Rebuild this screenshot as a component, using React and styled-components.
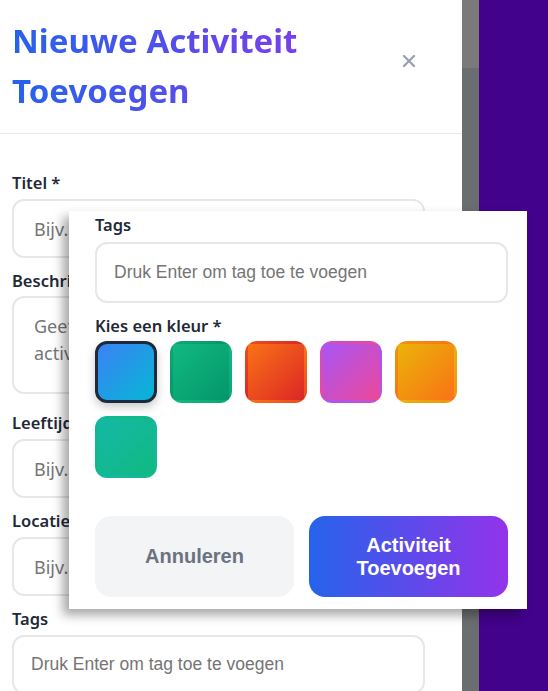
import React from "react";
import styled, { createGlobalStyle } from "styled-components";

const Global = createGlobalStyle`
  html, body { margin: 0; padding: 0; }
  body { font-family: "Noto Sans", "Open Sans", sans-serif; background: #fff; }
  * { box-sizing: border-box; }
`;

const Page = styled.div`
  position: relative;
  display: flex;
  width: 548px;
  height: 691px;
  overflow: hidden;
`;

const Modal = styled.div`
  width: 462px;
  flex: none;
  height: 691px;
  background: #fff;
  overflow: hidden;
  display: flex;
  flex-direction: column;
`;

const Strip = styled.div`
  width: 17px;
  flex: none;
  display: flex;
  flex-direction: column;
`;

const StripPart = styled.div`
  height: ${(p) => (p.$h ? `${p.$h}px` : "auto")};
  flex: ${(p) => (p.$h ? "none" : "1")};
  background: ${(p) => p.$c};
`;

const Backdrop = styled.div`
  flex: 1;
  background: #43028b;
`;

const Header = styled.div`
  display: flex;
  align-items: center;
  gap: 3px;
  padding: 16px 37px 17px 12px;
  border-bottom: 1px solid #e5e7eb;
`;

const Title = styled.h2`
  flex: 1;
  margin: 0;
  font-size: 33px;
  line-height: 50px;
  font-weight: 700;
  background: linear-gradient(90deg, #2563eb, #9333ea);
  -webkit-background-clip: text;
  background-clip: text;
  color: transparent;
`;

const Close = styled.button`
  width: 32px;
  height: 32px;
  margin-bottom: 10px;
  border: none;
  background: none;
  padding: 0;
  display: flex;
  align-items: center;
  justify-content: center;
  color: #9ca3af;
  cursor: pointer;
`;

const Form = styled.div`
  padding: 38px 37px 0 12px;
  display: flex;
  flex-direction: column;
`;

const Group = styled.div`
  display: flex;
  flex-direction: column;
  margin-bottom: ${(p) => p.$mb ?? 12}px;
`;

const Label = styled.label`
  display: block;
  font-size: 16.5px;
  line-height: 22px;
  font-weight: 600;
  color: #1f2937;
  margin-bottom: ${(p) => p.$mb ?? 5}px;
`;

const Input = styled.input`
  display: block;
  width: 100%;
  height: ${(p) => p.$h ?? 59}px;
  border: 2px solid #e5e7eb;
  border-radius: 12px;
  padding: 0 ${(p) => (p.$arial ? 17 : 20)}px;
  font-family: ${(p) =>
    p.$arial ? '"Liberation Sans", Arial, sans-serif' : '"Noto Sans", sans-serif'};
  font-size: ${(p) => (p.$arial ? 17.5 : 18)}px;
  color: #111827;
  background: #fff;
  outline: none;
  &::placeholder { color: #757575; }
`;

const TextArea = styled.textarea`
  display: block;
  width: 100%;
  height: 98px;
  border: 2px solid #e5e7eb;
  border-radius: 12px;
  padding: 15px 20px;
  font-family: "Noto Sans", sans-serif;
  font-size: 18px;
  line-height: 27px;
  resize: none;
  outline: none;
  &::placeholder { color: #757575; }
`;

const Sheet = styled.div`
  position: absolute;
  left: 69px;
  top: 211px;
  width: 458px;
  height: 398px;
  background: #fff;
  box-shadow: -6px 6px 10px rgba(0, 0, 0, 0.35);
  padding: 3px 19px 12px 26px;
  display: flex;
  flex-direction: column;
`;

const Swatches = styled.div`
  display: flex;
  flex-wrap: wrap;
  gap: 13px;
`;

const Swatch = styled.button`
  width: 62px;
  height: 62px;
  padding: 0;
  border-radius: 12px;
  border: 3px solid ${(p) => (p.$selected ? "#1e293b" : "transparent")};
  background: linear-gradient(135deg, ${(p) => p.$from}, ${(p) => p.$to});
  box-shadow: ${(p) => (p.$selected ? "0 4px 10px rgba(0,0,0,0.22)" : "none")};
  cursor: pointer;
`;

const Actions = styled.div`
  margin-top: 38px;
  display: grid;
  grid-template-columns: 1fr 1fr;
  gap: 15px;
`;

const Button = styled.button`
  height: 81px;
  border: none;
  border-radius: 16px;
  padding: 0 20px;
  font-family: "Liberation Sans", Arial, sans-serif;
  font-size: 20px;
  line-height: 23px;
  font-weight: 700;
  text-align: center;
  cursor: pointer;
  color: ${(p) => (p.$primary ? "#fff" : "#6b7280")};
  background: ${(p) =>
    p.$primary ? "linear-gradient(90deg, #2563eb, #9333ea)" : "#f3f4f6"};
`;

const colors = [
  ["#3b82f6", "#06b6d4"],
  ["#10b981", "#059669"],
  ["#f97316", "#dc2626"],
  ["#a855f7", "#ec4899"],
  ["#eab308", "#f97316"],
  ["#14b8a6", "#10b981"],
];

export default function App() {
  return (
    <>
      <Global />
      <Page>
        <Modal>
          <Header>
            <Title>Nieuwe Activiteit Toevoegen</Title>
            <Close aria-label="Sluiten">
              <svg width="16" height="16" viewBox="0 0 16 16">
                <path d="M3 3 L13 13 M13 3 L3 13" stroke="currentColor" strokeWidth="2.4" strokeLinecap="round" />
              </svg>
            </Close>
          </Header>
          <Form>
            <Group>
              <Label>Titel *</Label>
              <Input placeholder="Bijv. Knutselmiddag" />
            </Group>
            <Group $mb={18}>
              <Label $mb={4}>Beschrijving</Label>
              <TextArea placeholder="Geef een korte beschrijving van de activiteit" />
            </Group>
            <Group>
              <Label>Leeftijdsgroep</Label>
              <Input placeholder="Bijv. 4-8 jaar" />
            </Group>
            <Group>
              <Label>Locatie</Label>
              <Input placeholder="Bijv. Speelzaal" />
            </Group>
            <Group>
              <Label>Tags</Label>
              <Input $arial placeholder="Druk Enter om tag toe te voegen" />
            </Group>
          </Form>
        </Modal>
        <Strip>
          <StripPart $h={68} $c="#7a7a7a" />
          <StripPart $c="#6b6e71" />
        </Strip>
        <Backdrop />
        <Sheet>
          <Group>
            <Label $mb={6}>Tags</Label>
            <Input $arial $h={61} placeholder="Druk Enter om tag toe te voegen" />
          </Group>
          <Label $mb={4}>Kies een kleur *</Label>
          <Swatches>
            {colors.map(([f, t], i) => (
              <Swatch key={i} $from={f} $to={t} $selected={i === 0} />
            ))}
          </Swatches>
          <Actions>
            <Button>Annuleren</Button>
            <Button $primary>Activiteit Toevoegen</Button>
          </Actions>
        </Sheet>
      </Page>
    </>
  );
}
